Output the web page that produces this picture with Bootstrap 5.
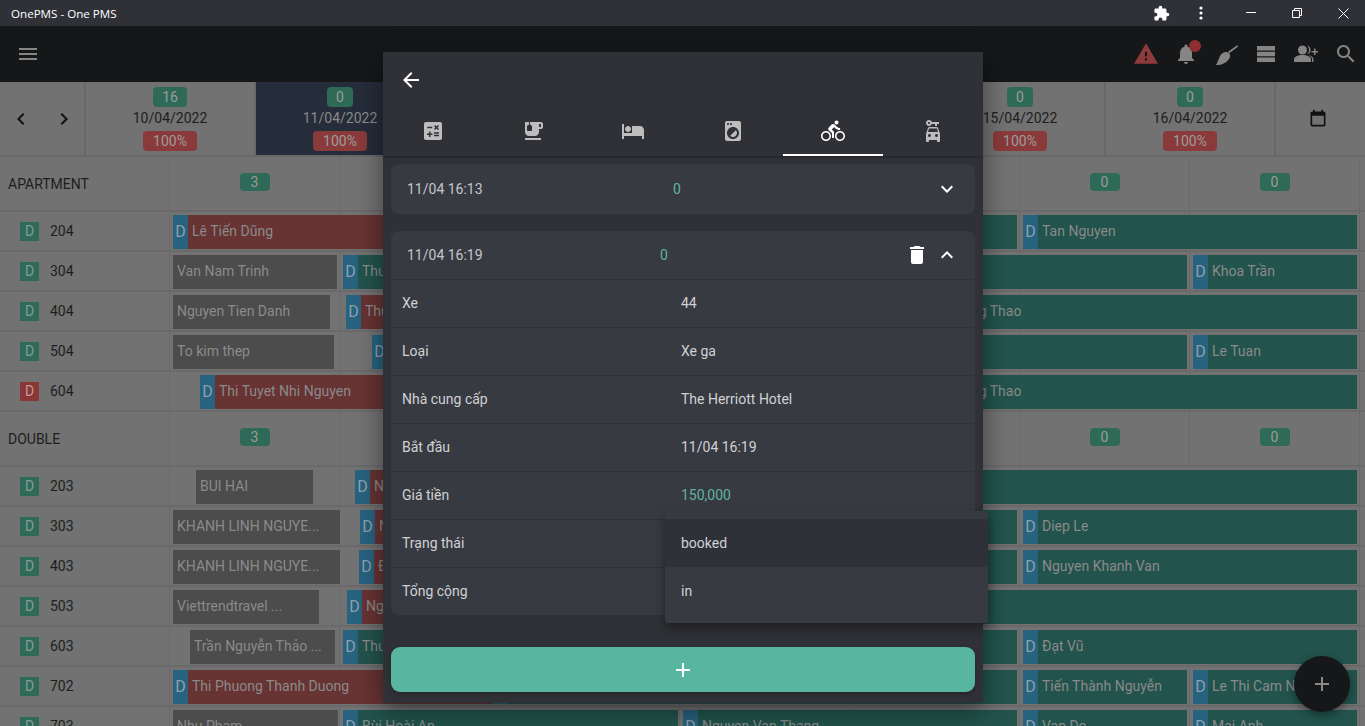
<!DOCTYPE html>
<html lang="vi">
<head>
  <meta charset="UTF-8" />
  <meta name="viewport" content="width=device-width, initial-scale=1.0"/>
  <title>OnePMS - One PMS</title>
  <link rel="stylesheet" href="https://cdn.jsdelivr.net/npm/bootstrap@5.3.2/dist/css/bootstrap.min.css"/>
  <style>
    html, body { height: 726px; overflow: hidden; }
    body { background: #727272; font-family: Roboto, "Liberation Sans", sans-serif; font-size: 14px; color: #1e1e1e; }
    svg { fill: currentColor; display: block; }
    svg.line-ico { fill: none; stroke: #fff; }

    .title-bar { height: 26px; background: #2f3137; color: #fff; font: 11.6px "Open Sans", "Liberation Sans", sans-serif; padding-left: 11px; }
    .win-btn { width: 46px; height: 26px; }
    .ext-btn { width: 40px; height: 26px; }
    .win-last { margin-right: -1px; }
    .ext-last { margin-right: 7px; }

    .tool-bar { height: 56px; background: #161719; color: #858585; padding-left: 16px; }
    .tool-set { margin-right: -1px; }
    .tool-btn { width: 40px; height: 56px; position: relative; }
    .warn-ico { color: #8e3b3b; }
    .bell-dot { position: absolute; width: 12px; height: 12px; border-radius: 50%; background: #8e2f2f; left: 23px; top: 14px; }

    .sched { height: 644px; overflow: hidden; background: #727272; }
    .date-row { height: 75px; border-bottom: 2px solid #686868; }
    .nav-cell { width: 86px; color: #111; border-right: 2px solid #686868; padding-left: 9px; gap: 19px; }
    .date-cell { width: 170px; border-right: 2px solid #686868; line-height: 1; padding-top: 5px; color: #1e1e1e; }
    .date-cell.today { background: #252c3a; color: #8a8a8a; border-right-color: #252c3a; }
    .cal-cell { width: 84px; color: #111; }
    .pill-g, .pill-r { color: #9c9c9c; border-radius: 4px; height: 20px; line-height: 20px; text-align: center; font-size: 14px; }
    .pill-g { background: #2e6a57; padding: 0 9px; }
    .pill-r { background: #8a3a3a; padding: 0 10px; margin-top: 2px; }
    .date-txt { height: 22px; line-height: 22px; }

    .group-row { height: 55px; }
    .room-row { height: 40px; }
    .group-row, .room-row { border-bottom: 2px solid #6a6a6a; }
    .name-cell { width: 170px; flex: none; border-right: 1px solid #6a6a6a; }
    .group-row .name-cell { padding: 2px 0 0 8px; }
    .room-row .name-cell { padding-left: 20px; gap: 11px; }
    .flag-d { width: 19px; height: 19px; line-height: 19px; text-align: center; background: #2e6a57; color: #879c95; }
    .flag-d.dirty { background: #8a3636; color: #c09a9a; }
    .track { position: relative; flex: 1; }
    .track-cell { width: 170px; flex: none; border-right: 1px solid #6a6a6a; }
    .count-pill { width: 30px; height: 18px; line-height: 18px; text-align: center; background: #2e6a57; color: #9c9c9c; border-radius: 4px; margin-top: -3px; }

    .ev { position: absolute; top: 3px; height: 34px; line-height: 32px; color: #8a8a8a; white-space: nowrap; overflow: hidden; }
    .ev-flag { width: 15px; background: #27627f; color: #8ea0aa; text-align: center; flex: none; font-size: 16px; line-height: 33px; }
    .ev-txt { padding-left: 4px; overflow: hidden; text-overflow: ellipsis; }
    .ev-gray { background: #4c4c4c; }
    .ev-red { background: #683333; }
    .ev-teal { background: #22534c; }

    .fab-add { position: absolute; left: 1294px; top: 656px; width: 56px; height: 56px; border-radius: 50%; background: #161719; color: #8a8a8a; box-shadow: 0 3px 8px rgba(0,0,0,.4); }

    .panel-sheet { position: absolute; left: 383px; top: 52px; width: 600px; height: 651px; background: #303136; color: #d4d4d6; box-shadow: 0 8px 24px rgba(0,0,0,.45); }
    .sheet-head { height: 56px; padding-left: 16px; color: #fff; }
    .sheet-tabs { height: 48px; box-shadow: 0 2px 2px -1px rgba(0,0,0,.35); }
    .sheet-tab { width: 100px; height: 48px; color: #bdbdbd; padding-top: 11px; }
    .sheet-tab.active { color: #fff; border-bottom: 2px solid #fff; }
    .sheet-body { padding: 8px 8px 0; }
    .exp-card { background: #383a42; border-radius: 8px; margin-bottom: 17px; overflow: hidden; }
    .exp-head { height: 50px; padding: 0 16px; color: #c4c5c8; }
    .exp-head.open { height: 48px; }
    .exp-col { flex: 1 1 0; }
    .exp-num { color: #5db4a0; text-indent: 2px; }
    .chev { width: 24px; color: #fff; flex: none; }
    .trash { width: 24px; color: #fff; flex: none; margin: 0 6px 0 -4px; }
    .info-row { height: 48px; border-top: 1px solid #30323a; padding-left: 11px; color: #d0d1d3; }
    .info-key { width: 279px; flex: none; }
    .info-teal { color: #5db4a0; }
    .add-wide { position: absolute; left: 8px; top: 595px; width: 584px; height: 45px; background: #58b5a0; border: 0; border-radius: 9px; color: #fff; box-shadow: 0 2px 4px rgba(0,0,0,.25); }
    .add-wide:hover { background: #58b5a0; color: #fff; }

    .pick-menu { position: absolute; left: 282px; top: 459px; width: 323px; height: 112px; padding: 8px 0; background: #383a42; border-radius: 3px; box-shadow: 0 5px 12px rgba(0,0,0,.4); color: #d0d1d3; }
    .pick-item { height: 48px; padding-left: 16px; }
    .pick-item.sel { background: #2f3138; }
  </style>
</head>
<body>
  <div class="title-bar d-flex align-items-center">
    <span class="flex-grow-1">OnePMS - One PMS</span>
    <div class="ext-btn d-flex align-items-center justify-content-center"><svg width="17" height="17" viewBox="0 0 24 24"><path d="M20.5 11H19V7c0-1.1-.9-2-2-2h-4V3.5C13 2.12 11.88 1 10.5 1S8 2.12 8 3.5V5H4c-1.1 0-1.99.9-1.99 2v3.8H3.5c1.49 0 2.7 1.21 2.7 2.7s-1.21 2.7-2.7 2.7H2V20c0 1.1.9 2 2 2h3.8v-1.5c0-1.49 1.21-2.7 2.7-2.7 1.49 0 2.7 1.21 2.7 2.7V22H17c1.1 0 2-.9 2-2v-4h1.5c1.38 0 2.5-1.12 2.5-2.5S21.88 11 20.5 11z"/></svg></div>
    <div class="ext-btn ext-last d-flex align-items-center justify-content-center"><svg width="4" height="14" viewBox="0 0 4 14"><circle cx="2" cy="2" r="1.6"/><circle cx="2" cy="7" r="1.6"/><circle cx="2" cy="12" r="1.6"/></svg></div>
    <div class="win-btn d-flex align-items-center justify-content-center"><svg width="10" height="2" viewBox="0 0 10 2"><rect width="10" height="1"/></svg></div>
    <div class="win-btn d-flex align-items-center justify-content-center"><svg class="line-ico" width="10" height="10" viewBox="0 0 10 10"><path d="M.5 2.5h7v7h-7zM2.5 2.5v-2h7v7h-2"/></svg></div>
    <div class="win-btn win-last d-flex align-items-center justify-content-center"><svg class="line-ico" width="11" height="11" viewBox="0 0 11 11"><path d="M.5.5l10 10M10.5.5l-10 10"/></svg></div>
  </div>

  <div class="tool-bar d-flex align-items-center justify-content-between">
    <svg width="24" height="24" viewBox="0 0 24 24"><path d="M3 18h18v-2H3v2zm0-5h18v-2H3v2zm0-7v2h18V6H3z"/></svg>
    <div class="tool-set d-flex">
      <div class="tool-btn warn-ico d-flex align-items-center justify-content-center"><svg width="26" height="26" viewBox="0 0 24 24"><path d="M1 21h22L12 2 1 21zm12-3h-2v-2h2v2zm0-4h-2v-4h2v4z"/></svg></div>
      <div class="tool-btn d-flex align-items-center justify-content-center"><svg width="24" height="24" viewBox="0 0 24 24"><path d="M12 22c1.1 0 2-.9 2-2h-4c0 1.1.89 2 2 2zm6-6v-5c0-3.07-1.64-5.64-4.5-6.32V4c0-.83-.67-1.5-1.5-1.5s-1.5.67-1.5 1.5v.68C7.63 5.36 6 7.92 6 11v5l-2 2v1h16v-1l-2-2z"/></svg><span class="bell-dot"></span></div>
      <div class="tool-btn d-flex align-items-center justify-content-center"><svg width="24" height="24" viewBox="0 0 24 24"><path d="M23.2 3.2l1 1.4-9 6.6-1.1-1.5zM11.5 10C14 9.8 16.300 11.600 16.200 14 15.500 18 11 22 5 23H1.800C3.500 21 3.800 19 4.800 17 6 13 8.500 10.300 11.500 10z"/></svg></div>
      <div class="tool-btn d-flex align-items-center justify-content-center"><svg width="24" height="24" viewBox="0 0 24 24"><path d="M3 4h18v4.500H3zM3 9.750h18v4.500H3zM3 15.500h18V20H3z"/></svg></div>
      <div class="tool-btn d-flex align-items-center justify-content-center"><svg width="24" height="24" viewBox="0 0 24 24"><circle cx="8.500" cy="8" r="4.500"/><path d="M0 20v-2.500c0-2.800 4-4.500 8.500-4.500s8.500 1.700 8.500 4.500V20zM13 3.600a4.500 4.500 0 0 1 0 8.800c2.800-1.500 2.800-7.300 0-8.800zM15 13.200c2.600.5 4.500 2 4.500 4.300V20h-1.500v-2.500c0-1.800-1-3.200-3-4.300zM20 6.500h1.500V9H24v1.500h-2.500V13H20v-2.500h-2.500V9H20z"/></svg></div>
      <div class="tool-btn d-flex align-items-center justify-content-center"><svg width="24" height="24" viewBox="0 0 24 24"><path d="M15.5 14h-.79l-.28-.27C15.41 12.59 16 11.11 16 9.5 16 5.91 13.09 3 9.5 3S3 5.91 3 9.5 5.91 16 9.5 16c1.61 0 3.09-.59 4.23-1.57l.27.28v.79l5 4.99L20.49 19l-4.99-5zm-6 0C7.01 14 5 11.99 5 9.5S7.01 5 9.5 5 14 7.01 14 9.5 11.99 14 9.5 14z"/></svg></div>
    </div>
  </div>

  <div class="sched">
    <div class="date-row d-flex">
      <div class="nav-cell d-flex align-items-center">
        <svg width="24" height="24" viewBox="0 0 24 24"><path d="M15.41 7.41L14 6l-6 6 6 6 1.41-1.41L10.83 12z"/></svg>
        <svg width="24" height="24" viewBox="0 0 24 24"><path d="M10 6L8.59 7.41 13.17 12l-4.58 4.59L10 18l6-6z"/></svg>
      </div>
      <div id="ngay" class="d-flex"></div>
      <div class="cal-cell d-flex align-items-center justify-content-center"><svg width="20" height="20" viewBox="0 0 24 24"><path d="M19 3h-1V1h-2v2H8V1H6v2H5c-1.11 0-2 .9-2 2v14c0 1.1.89 2 2 2h14c1.1 0 2-.9 2-2V5c0-1.1-.9-2-2-2zm0 16H5V8h14v11z"/></svg></div>
    </div>
    <div id="phong"></div>
  </div>

  <div class="fab-add d-flex align-items-center justify-content-center"><svg width="24" height="24" viewBox="0 0 24 24"><path d="M19 13h-6v6h-2v-6H5v-2h6V5h2v6h6v2z"/></svg></div>

  <div class="panel-sheet">
    <div class="sheet-head d-flex align-items-center"><svg width="24" height="24" viewBox="0 0 24 24"><path d="M20 11H7.83l5.59-5.59L12 4l-8 8 8 8 1.41-1.41L7.83 13H20v-2z"/></svg></div>
    <div class="sheet-tabs d-flex">
      <div class="sheet-tab d-flex justify-content-center"><svg width="24" height="24" viewBox="0 0 24 24"><path d="M19 3H5c-1.1 0-2 .9-2 2v14c0 1.1.9 2 2 2h14c1.1 0 2-.9 2-2V5c0-1.1-.9-2-2-2zm-5.97 4.06L14.09 6l1.41 1.41L16.91 6l1.06 1.06-1.41 1.41 1.41 1.41-1.06 1.06-1.41-1.4-1.41 1.41-1.06-1.06 1.41-1.41-1.41-1.42zm-6.78.66h5v1.5h-5v-1.5zM11.5 16h-2v2H8v-2H6v-1.5h2v-2h1.5v2h2V16zm6.5 1.25h-5v-1.5h5v1.5zm0-2.5h-5v-1.5h5v1.5z"/></svg></div>
      <div class="sheet-tab d-flex justify-content-center"><svg width="24" height="24" viewBox="0 0 24 24"><path d="M20 3H9v2.4l1.81 1.45c.12.09.19.24.19.39v4.26c0 .28-.22.5-.5.5h-4c-.28 0-.5-.22-.5-.5V7.24c0-.15.07-.3.19-.39L8 5.4V3H4v10c0 2.21 1.79 4 4 4h6c2.21 0 4-1.79 4-4v-3h2c1.11 0 2-.89 2-2V5c0-1.11-.89-2-2-2zm0 5h-2V5h2v3zM4 19h16v2H4z"/></svg></div>
      <div class="sheet-tab d-flex justify-content-center"><svg width="24" height="24" viewBox="0 0 24 24"><path d="M7 13c1.66 0 3-1.34 3-3S8.66 7 7 7s-3 1.34-3 3 1.34 3 3 3zm12-6h-8v7H3V5H1v15h2v-3h18v3h2v-9c0-2.21-1.79-4-4-4z"/></svg></div>
      <div class="sheet-tab d-flex justify-content-center"><svg width="24" height="24" viewBox="0 0 24 24"><path d="M9.17 16.83c1.56 1.56 4.1 1.56 5.66 0 1.56-1.56 1.56-4.1 0-5.66l-5.66 5.66zM18 2.01L6 2c-1.11 0-2 .89-2 2v16c0 1.11.89 2 2 2h12c1.11 0 2-.89 2-2V4c0-1.11-.89-1.99-2-1.99zM10 4c.55 0 1 .45 1 1s-.45 1-1 1-1-.45-1-1 .45-1 1-1zM7 4c.55 0 1 .45 1 1s-.45 1-1 1-1-.45-1-1 .45-1 1-1zm5 16c-3.31 0-6-2.69-6-6s2.69-6 6-6 6 2.69 6 6-2.69 6-6 6z"/></svg></div>
      <div class="sheet-tab active d-flex justify-content-center"><svg width="24" height="24" viewBox="0 0 24 24"><path d="M15.5 5.5c1.1 0 2-.9 2-2s-.9-2-2-2-2 .9-2 2 .9 2 2 2zM5 12c-2.8 0-5 2.2-5 5s2.2 5 5 5 5-2.2 5-5-2.2-5-5-5zm0 8.5c-1.9 0-3.5-1.6-3.5-3.5s1.6-3.5 3.5-3.5 3.5 1.6 3.5 3.5-1.6 3.5-3.5 3.5zm5.8-10l2.4-2.4.8.8c1.3 1.3 3 2.1 5.1 2.1V9c-1.5 0-2.7-.6-3.6-1.5l-1.9-1.9c-.5-.4-1-.6-1.6-.6s-1.1.2-1.4.6L7.8 8.4c-.4.4-.6.9-.6 1.4 0 .6.2 1.1.6 1.4L11 14v5h2v-6.2l-2.2-2.3zM19 12c-2.8 0-5 2.2-5 5s2.2 5 5 5 5-2.2 5-5-2.2-5-5-5zm0 8.5c-1.9 0-3.5-1.6-3.5-3.5s1.6-3.5 3.5-3.5 3.5 1.6 3.5 3.5-1.6 3.5-3.5 3.5z"/></svg></div>
      <div class="sheet-tab d-flex justify-content-center"><svg width="24" height="24" viewBox="0 0 24 24"><path fill-rule="evenodd" d="M10.83 3C10.41 1.83 9.3 1 8 1 6.34 1 5 2.34 5 4c0 1.65 1.34 3 3 3 1.3 0 2.41-.84 2.83-2H14v2h2V5h2V3h-7.17zM8 5c-.55 0-1-.45-1-1s.45-1 1-1 1 .45 1 1-.45 1-1 1zM17.11 9.34C16.84 8.54 16.08 8 15.2 8H8.8c-.88 0-1.64.55-1.91 1.34L5 15v7c0 .55.45 1 1 1h1c.55 0 1-.45 1-1v-1h8v1c0 .55.45 1 1 1h1c.55 0 1-.45 1-1v-7l-1.89-5.66zM8.5 18c-.83 0-1.5-.67-1.5-1.5S7.67 15 8.5 15s1.5.67 1.5 1.5S9.33 18 8.5 18zm7 0c-.83 0-1.5-.67-1.5-1.5s.67-1.5 1.5-1.5 1.5.67 1.5 1.5-.67 1.5-1.5 1.5zM7 13l1-3.5h8l1 3.5H7z"/></svg></div>
    </div>

    <div class="sheet-body">
      <div class="exp-card">
        <div class="exp-head d-flex align-items-center">
          <span class="exp-col">11/04 16:13</span>
          <span class="exp-col exp-num">0</span>
          <span class="chev"><svg width="24" height="24" viewBox="0 0 24 24"><path d="M16.59 8.59L12 13.17 7.41 8.59 6 10l6 6 6-6z"/></svg></span>
        </div>
      </div>
      <div class="exp-card">
        <div class="exp-head open d-flex align-items-center">
          <span class="exp-col">11/04 16:19</span>
          <span class="exp-col exp-num">0</span>
          <span class="trash"><svg width="24" height="24" viewBox="0 0 24 24"><path d="M6 19c0 1.1.9 2 2 2h8c1.1 0 2-.9 2-2V7H6v12zM19 4h-3.5l-1-1h-5l-1 1H5v2h14V4z"/></svg></span>
          <span class="chev"><svg width="24" height="24" viewBox="0 0 24 24"><path d="M12 8l-6 6 1.41 1.41L12 10.83l4.59 4.58L18 14z"/></svg></span>
        </div>
        <div class="info-row d-flex align-items-center"><span class="info-key">Xe</span><span>44</span></div>
        <div class="info-row d-flex align-items-center"><span class="info-key">Loại</span><span>Xe ga</span></div>
        <div class="info-row d-flex align-items-center"><span class="info-key">Nhà cung cấp</span><span>The Herriott Hotel</span></div>
        <div class="info-row d-flex align-items-center"><span class="info-key">Bắt đầu</span><span>11/04 16:19</span></div>
        <div class="info-row d-flex align-items-center"><span class="info-key">Giá tiền</span><span class="info-teal">150,000</span></div>
        <div class="info-row d-flex align-items-center"><span class="info-key">Trạng thái</span></div>
        <div class="info-row d-flex align-items-center"><span class="info-key">Tổng cộng</span></div>
      </div>
    </div>

    <button type="button" class="btn add-wide d-flex align-items-center justify-content-center p-0"><svg width="24" height="24" viewBox="0 0 24 24"><path d="M19 13h-6v6h-2v-6H5v-2h6V5h2v6h6v2z"/></svg></button>

    <div class="pick-menu">
      <div class="pick-item sel d-flex align-items-center">booked</div>
      <div class="pick-item d-flex align-items-center">in</div>
    </div>
  </div>

  <script>
    const ngay = ["10/04/2022", "11/04/2022", "12/04/2022", "13/04/2022", "14/04/2022", "15/04/2022", "16/04/2022"];
    const demNgay = [16, 0, 0, 0, 0, 0, 0];
    document.getElementById("ngay").innerHTML = ngay.map((n, i) => `
      <div class="date-cell ${i === 1 ? "today" : ""} d-flex flex-column align-items-center">
        <span class="pill-g">${demNgay[i]}</span>
        <span class="date-txt">${n}</span>
        <span class="pill-r">100%</span>
      </div>`).join("");

    // x, do rong theo toa do man hinh; mau; co "D" hay khong; ten khach
    const phong = [
      { nhom: "APARTMENT", dem: [3, "", "", "", "", 0, 0] },
      { so: 204, ev: [[173, 400, "red", 1, "Lê Tiến Dũng"], [600, 417, "teal", 0, ""], [1023, 334, "teal", 1, "Tan Nguyen"]] },
      { so: 304, ev: [[173, 164, "gray", 0, "Van Nam Trinh"], [343, 844, "teal", 1, "Thu"], [1193, 164, "teal", 1, "Khoa Trần"]] },
      { so: 404, ev: [[173, 157, "gray", 0, "Nguyen Tien Danh"], [346, 300, "red", 1, "Thu"], [932, 425, "teal", 1, "Trang Thao"]] },
      { so: 504, ev: [[173, 161, "gray", 0, "To kim thep"], [372, 815, "teal", 1, ""], [1193, 164, "teal", 1, "Le Tuan"]] },
      { so: 604, hong: 1, ev: [[200, 400, "red", 1, "Thi Tuyet Nhi Nguyen"], [932, 425, "teal", 1, "Trang Thao"]] },
      { nhom: "DOUBLE", dem: [3, "", "", "", "", 0, 0] },
      { so: 203, ev: [[196, 117, "gray", 0, "BUI HAI"], [355, 200, "red", 1, "N"], [600, 757, "teal", 0, ""]] },
      { so: 303, ev: [[173, 167, "gray", 0, "KHANH LINH NGUYE..."], [360, 200, "red", 1, "N"], [600, 417, "teal", 0, ""], [1023, 334, "teal", 1, "Diep Le"]] },
      { so: 403, ev: [[173, 167, "gray", 0, "KHANH LINH NGUYE..."], [359, 200, "red", 1, "Đ"], [600, 417, "teal", 0, ""], [1023, 334, "teal", 1, "Nguyen Khanh Van"]] },
      { so: 503, ev: [[173, 146, "gray", 0, "Viettrendtravel ..."], [347, 200, "red", 1, "Ng"], [600, 757, "teal", 0, ""]] },
      { so: 603, ev: [[190, 145, "gray", 0, "Trần Nguyễn Thảo ..."], [343, 674, "teal", 1, "Thu"], [1023, 334, "teal", 1, "Đạt Vũ"]] },
      { so: 702, ev: [[173, 320, "red", 1, "Thi Phuong Thanh Duong"], [493, 524, "teal", 1, ""], [1023, 164, "teal", 1, "Tiến Thành Nguyễn"], [1193, 164, "teal", 1, "Le Thi Cam Nhung"]] },
      { so: 703, ev: [[173, 165, "gray", 0, "Nhu Pham"], [343, 335, "teal", 1, "Bùi Hoài An"], [683, 334, "teal", 1, "Nguyen Van Thang"], [1023, 164, "teal", 1, "Van Do"], [1193, 164, "teal", 1, "Mai Anh"]] }
    ];

    const oTrong = (dem) => Array.from({ length: 7 }, (_, k) => {
      const soDem = dem && dem[k] !== "" ? `<span class="count-pill">${dem[k]}</span>` : "";
      return `<div class="track-cell d-flex align-items-center justify-content-center">${soDem}</div>`;
    }).join("");

    document.getElementById("phong").innerHTML = phong.map((p) => {
      if (p.nhom) {
        return `<div class="group-row d-flex">
          <div class="name-cell d-flex align-items-center">${p.nhom}</div>
          <div class="track d-flex">${oTrong(p.dem)}</div>
        </div>`;
      }
      const thanh = p.ev.map(([x, w, mau, co, ten]) => `
        <div class="ev ev-${mau} d-flex" style="left:${x - 170}px;width:${w}px">
          ${co ? '<span class="ev-flag">D</span>' : ""}
          <span class="ev-txt">${ten}</span>
        </div>`).join("");
      return `<div class="room-row d-flex">
        <div class="name-cell d-flex align-items-center"><span class="flag-d ${p.hong ? "dirty" : ""}">D</span><span>${p.so}</span></div>
        <div class="track d-flex">${oTrong()}${thanh}</div>
      </div>`;
    }).join("");
  </script>
</body>
</html>
